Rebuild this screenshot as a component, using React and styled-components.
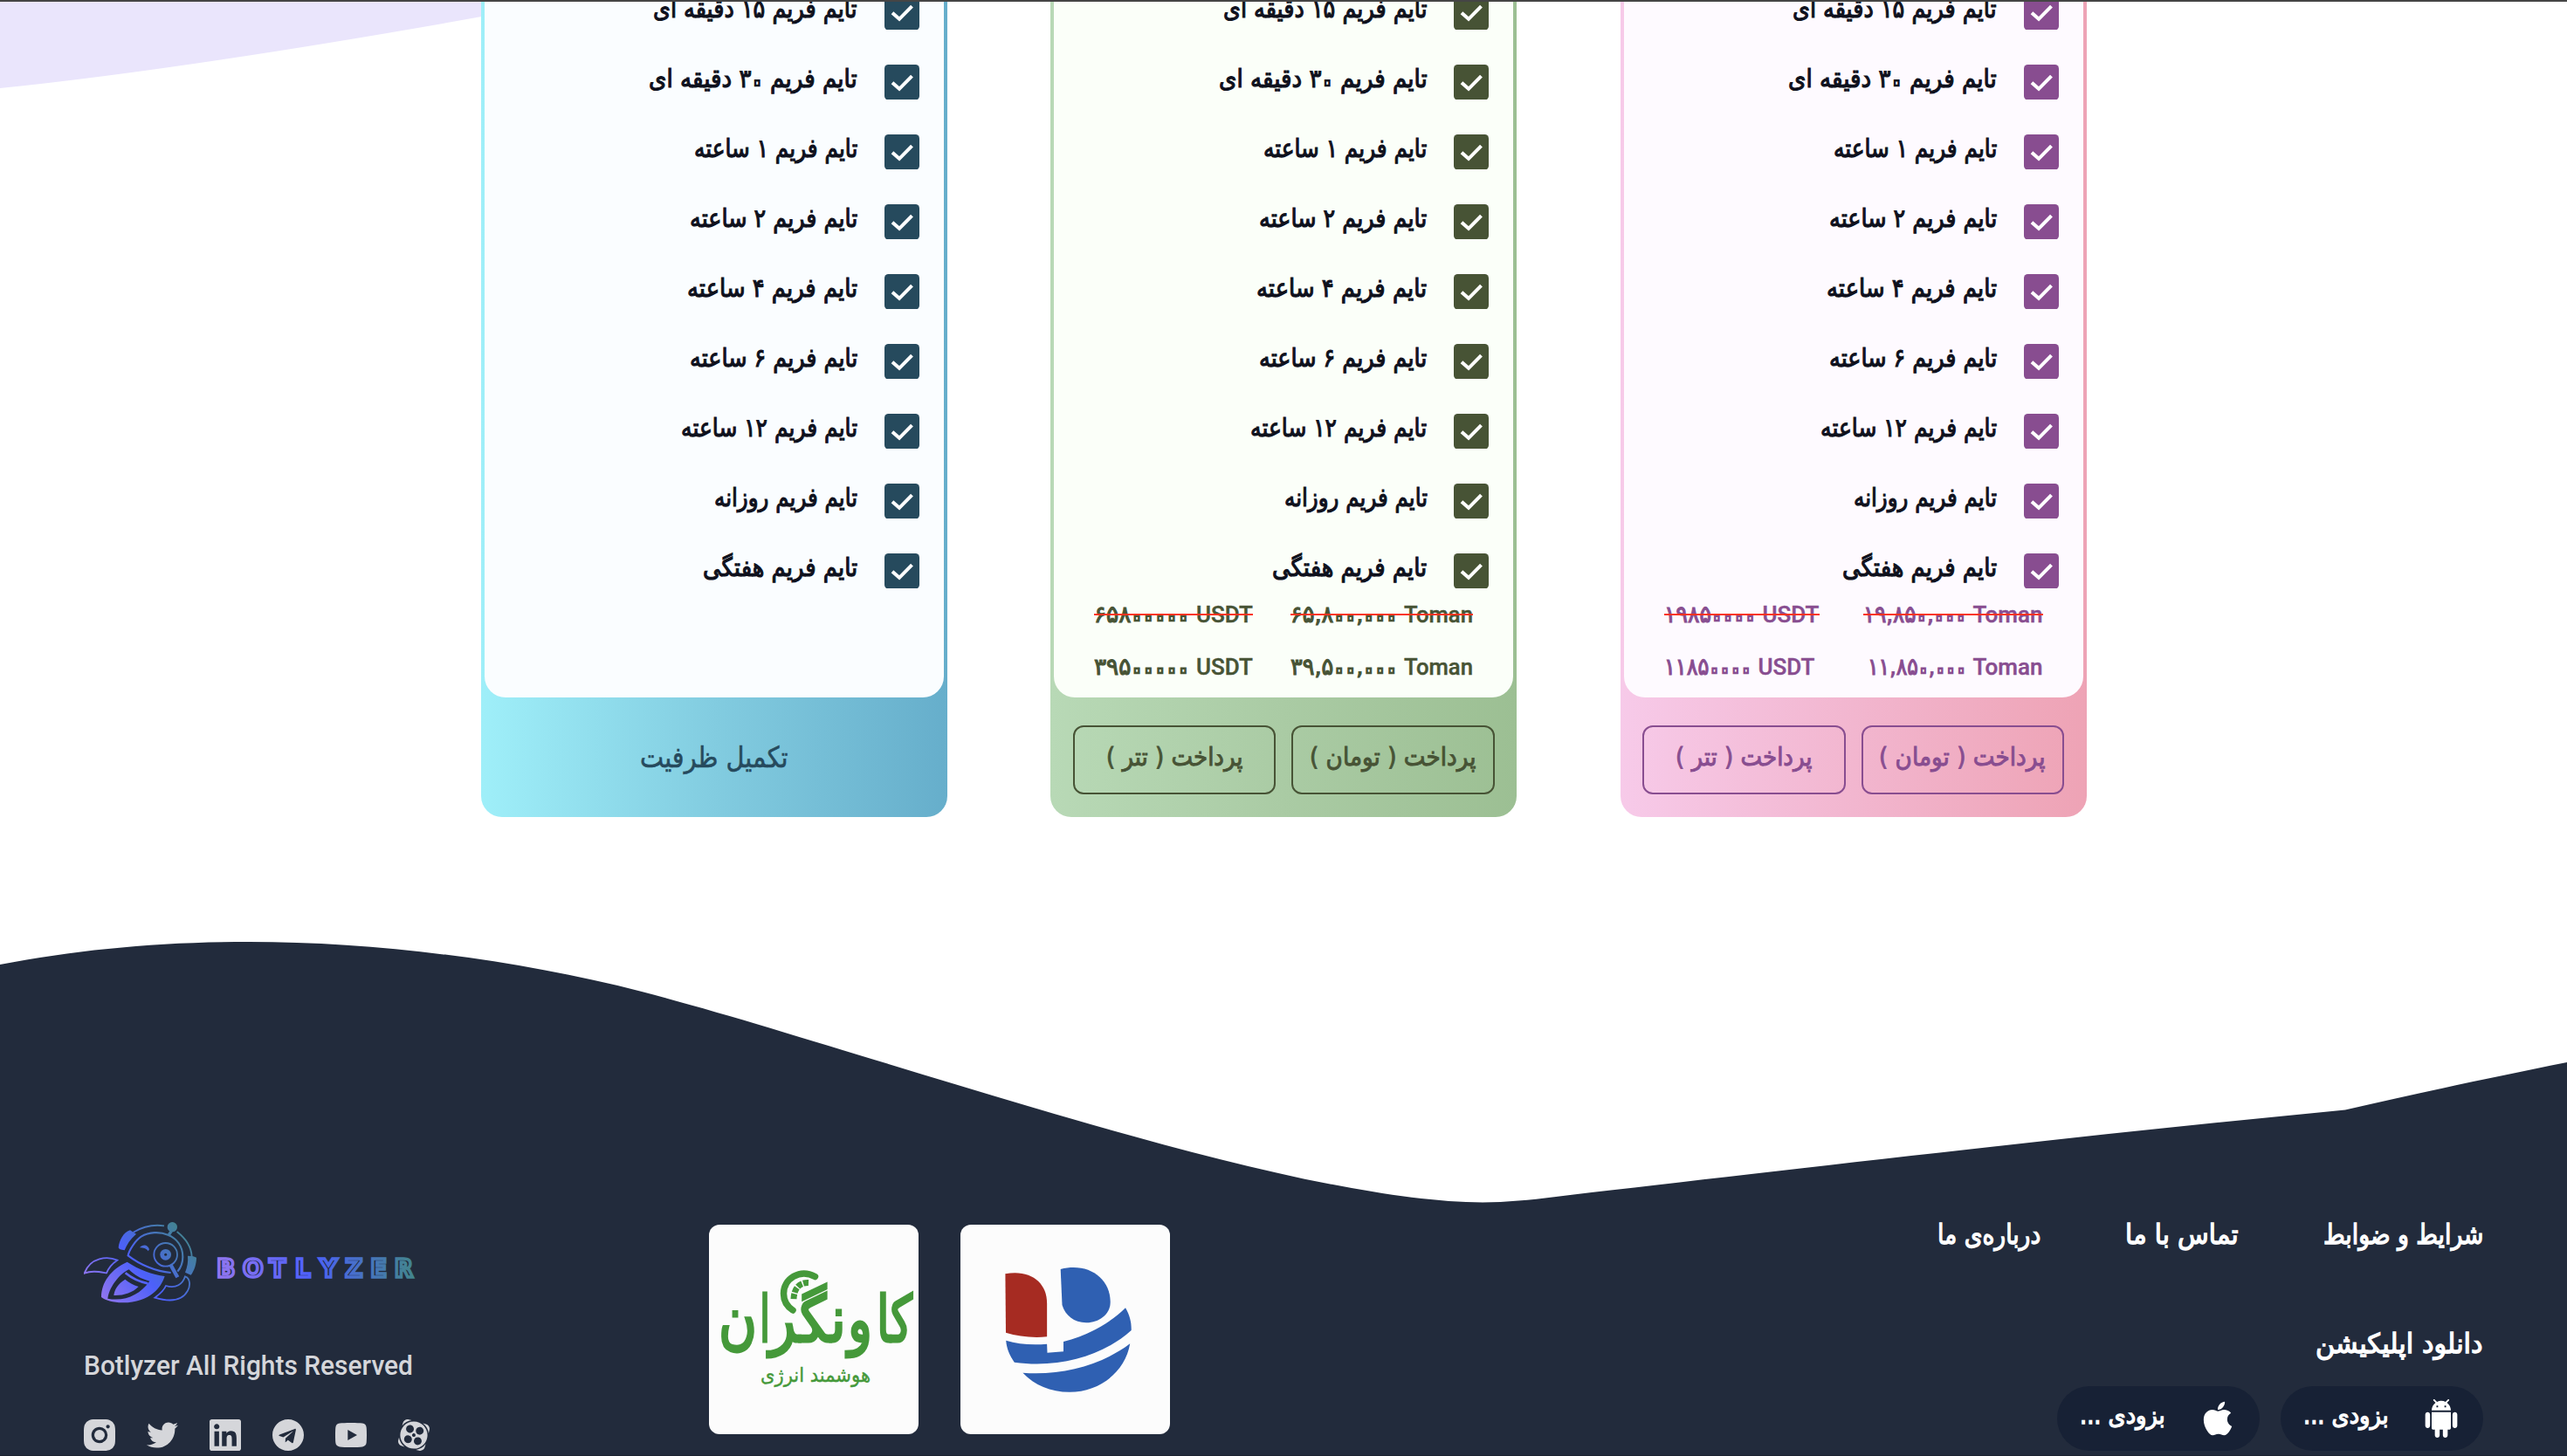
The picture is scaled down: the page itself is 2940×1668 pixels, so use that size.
import React, { useLayoutEffect, useRef, useState } from "react";
import styled, { createGlobalStyle } from "styled-components";
import { FaApple, FaLinkedin, FaTelegram, FaTwitter } from "react-icons/fa";
import { BiLogoInstagramAlt } from "react-icons/bi";
import { SiAparat } from "react-icons/si";

const GlobalStyle = createGlobalStyle`
  * { box-sizing: border-box; }
  html, body { margin: 0; padding: 0; background: #fff; }
  body { font-family: Roboto, "DejaVu Sans", sans-serif; }
`;

const INK = "#222b3c";

/* ---------- text that is condensed to a given measure ---------- */

const Measure = styled.span`
  display: inline-flex;
  flex: none;
  direction: ${(p) => p.$dir};
  width: ${(p) => p.$width}px;
  white-space: nowrap;
`;

const Glyphs = styled.span`
  display: block;
  flex: none;
  transform-origin: ${(p) => (p.$dir === "rtl" ? "right" : "left")} center;
`;

/* The Persian zero is drawn as a small open ring. */
const Zero = styled.span`
  position: relative;
  top: 0.16em;
  margin: 0 -0.11em;
  font-size: 1.6em;
  line-height: 0;
  -webkit-text-fill-color: ${(p) => p.$paper};
  -webkit-text-stroke: 2.6px currentColor;
`;

function Fit({ width, dir = "rtl", paper = "#fff", children }) {
  const ref = useRef(null);
  const [scale, setScale] = useState(1);
  useLayoutEffect(() => {
    setScale(width / ref.current.offsetWidth);
  }, [width]);
  return (
    <Measure $dir={dir} $width={width}>
      <Glyphs ref={ref} $dir={dir} style={{ transform: `scaleX(${scale})` }}>
        {children.split(/(۰)/).map((part, i) =>
          part === "۰" ? <Zero key={i} $paper={paper}>{part}</Zero> : part
        )}
      </Glyphs>
    </Measure>
  );
}

/* ---------- page ---------- */

const Page = styled.div`
  position: relative;
  width: 2940px;
  height: 1668px;
  overflow: hidden;
  background: #fff;
  border-top: 2px solid #454545;
`;

const Blob = styled.svg`
  position: absolute;
  top: 0;
  left: 0;
  width: 600px;
  height: 100px;
`;

/* ---------- plans ---------- */

const Plans = styled.section`
  position: relative;
  display: flex;
  justify-content: center;
  align-items: flex-end;
  gap: 118.5px;
  height: 934px;
  overflow: hidden;
`;

const Card = styled.article`
  flex: none;
  width: 534px;
  padding: 0 4px;
  border-radius: 0 0 24px 24px;
  background: linear-gradient(to right, ${(p) => p.$theme.from}, ${(p) => p.$theme.mid}, ${(p) => p.$theme.to});
  color: ${(p) => p.$theme.dark};
`;

const CardBody = styled.div`
  display: flex;
  flex-direction: column;
  direction: rtl;
  border-radius: 0 0 24px 24px;
  background: ${(p) => p.$theme.paper};
`;

const Features = styled.ul`
  display: flex;
  flex-direction: column;
  gap: 40px;
  margin: 0;
  padding: 0 28px;
  list-style: none;
`;

const Feature = styled.li`
  display: flex;
  align-items: center;
  gap: 30.5px;
  height: 40px;
`;

const Tick = styled.svg`
  flex: none;
  display: block;
  width: 40px;
  height: 40.5px;
  margin-top: -0.5px;
`;

const FeatureLabel = styled.span`
  display: flex;
  margin-top: -8px;
  font: 400 29.5px/40px "DejaVu Sans", sans-serif;
  color: #0f111d;
  -webkit-text-stroke: 1.2px currentColor;
`;

const Prices = styled.div`
  display: flex;
  flex-direction: column;
  direction: ltr;
  height: 125px;
  padding: 0 46px 5px;
`;

const PriceRow = styled.div`
  display: flex;
  justify-content: space-between;
  height: 60px;
  font: 500 26px/60px Roboto, "DejaVu Sans", sans-serif;
  -webkit-text-stroke: 0.4px currentColor;
`;

const Price = styled.span`
  position: relative;
  display: flex;
  align-items: baseline;
  gap: 8px;

  &::after {
    content: "";
    display: ${(p) => (p.$old ? "block" : "none")};
    position: absolute;
    left: 0;
    right: 0;
    top: 29px;
    height: 2px;
    background: #fb3420;
  }
`;

const Digits = styled.span`
  display: flex;
  font-family: "DejaVu Sans", sans-serif;
  font-weight: 400;
  font-size: 27px;
  -webkit-text-stroke: 1.2px currentColor;
`;

const Actions = styled.div`
  display: flex;
  direction: rtl;
  gap: 18px;
  height: 137px;
  padding: 32px 21.5px 26px;
`;

const PayButton = styled.button`
  flex: 1;
  display: flex;
  align-items: flex-start;
  justify-content: center;
  padding: 12px 0 0;
  border: 2px solid currentColor;
  border-radius: 12px;
  background: transparent;
  color: inherit;
  font: 400 29px/44px "DejaVu Sans", sans-serif;
  -webkit-text-stroke: 1px currentColor;
`;

const SoldOut = styled.div`
  display: flex;
  justify-content: center;
  height: 137px;
  padding-top: 44px;
  font: 400 33px/50px "DejaVu Sans", sans-serif;
  -webkit-text-stroke: 0.6px currentColor;
`;

const features = [
  ["تایم فریم ۱۵ دقیقه ای", 234],
  ["تایم فریم ۳۰ دقیقه ای", 239],
  ["تایم فریم ۱ ساعته", 187],
  ["تایم فریم ۲ ساعته", 192],
  ["تایم فریم ۴ ساعته", 195],
  ["تایم فریم ۶ ساعته", 192],
  ["تایم فریم ۱۲ ساعته", 202],
  ["تایم فریم روزانه", 164],
  ["تایم فریم هفتگی", 177],
];

const plans = [
  {
    id: "blue",
    theme: { from: "#9feff9", mid: "#82cce0", to: "#66aecb", paper: "#fafdff", dark: "#264a5d" },
    soldOut: true,
  },
  {
    id: "green",
    theme: { from: "#b8d9b6", mid: "#aacba4", to: "#9cbf93", paper: "#fbfff9", dark: "#475335" },
    old: [["۶۵۸۰۰۰۰۰", 109, 65], ["۶۵,۸۰۰,۰۰۰", 122, 79]],
    now: [["۳۹۵۰۰۰۰۰", 109, 65], ["۳۹,۵۰۰,۰۰۰", 122, 79]],
  },
  {
    id: "pink",
    theme: { from: "#f7cae9", mid: "#f2b6cf", to: "#eea3b5", paper: "#fefaff", dark: "#884d90" },
    old: [["۱۹۸۵۰۰۰۰", 105, 65], ["۱۹,۸۵۰,۰۰۰", 118, 80]],
    now: [["۱۱۸۵۰۰۰۰", 100, 65], ["۱۱,۸۵۰,۰۰۰", 113, 80]],
  },
];

function PriceLine({ items, old, paper }) {
  const units = ["USDT", "Toman"];
  return (
    <PriceRow>
      {items.map(([digits, width, unitWidth], i) => (
        <Price key={units[i]} $old={old}>
          <Digits>
            <Fit width={width} dir="ltr" paper={paper}>{digits}</Fit>
          </Digits>
          <Fit width={unitWidth} dir="ltr">{units[i]}</Fit>
        </Price>
      ))}
    </PriceRow>
  );
}

function Plan({ theme, old, now, soldOut }) {
  return (
    <Card $theme={theme}>
      <CardBody $theme={theme}>
        <Features>
          {features.map(([label, width]) => (
            <Feature key={label}>
              <Tick viewBox="0 0 40 40" preserveAspectRatio="none">
                <rect width="40" height="40" rx="4.5" fill={theme.dark} />
                <path d="M9 20.5 L17 27.5 L31.5 13" fill="none" stroke="#fff" strokeWidth="4" />
              </Tick>
              <FeatureLabel>
                <Fit width={width} paper={theme.paper}>{label}</Fit>
              </FeatureLabel>
            </Feature>
          ))}
        </Features>
        <Prices>
          {old && <PriceLine items={old} paper={theme.paper} old />}
          {now && <PriceLine items={now} paper={theme.paper} />}
        </Prices>
      </CardBody>
      {soldOut ? (
        <SoldOut>
          <Fit width={170}>تکمیل ظرفیت</Fit>
        </SoldOut>
      ) : (
        <Actions>
          <PayButton>
            <Fit width={190}>پرداخت ( تومان )</Fit>
          </PayButton>
          <PayButton>
            <Fit width={157}>پرداخت ( تتر )</Fit>
          </PayButton>
        </Actions>
      )}
    </Card>
  );
}

/* ---------- footer ---------- */

const Wave = styled.svg`
  display: block;
  width: 2940px;
  height: 300px;
  margin-top: 142px;
`;

const Footer = styled.footer`
  display: flex;
  align-items: flex-start;
  height: 290px;
  padding: 22px 96px 0;
  background: ${INK};
  border-bottom: 1px solid #1b2230;
  color: #fff;
`;

const Brand = styled.div`
  display: flex;
  flex-direction: column;
  width: 716px;
`;

const BrandMark = styled.svg`
  display: block;
  width: 400px;
  height: 94px;
`;

const Rights = styled.div`
  display: flex;
  margin-top: 51px;
  font: 500 31.5px/40px Roboto, sans-serif;
  color: #d5d6da;
`;

const Socials = styled.div`
  display: flex;
  gap: 36px;
  margin-top: 41px;
  color: #d5d6da;

  svg {
    display: block;
    width: 36px;
    height: 36px;
  }
`;

const Partners = styled.div`
  display: flex;
  gap: 48px;
  padding-top: 3px;
`;

const Partner = styled.svg`
  display: block;
  width: 240px;
  height: 240px;
  border-radius: 12px;
  background: #fcfcfc;
`;

const Links = styled.div`
  display: flex;
  flex-direction: column;
  direction: rtl;
  margin: -8px 0 0 auto;
  font: 400 31px/44px "DejaVu Sans", sans-serif;
  -webkit-text-stroke: 1.3px currentColor;
`;

const Nav = styled.nav`
  display: flex;
  gap: 97px;
  margin-bottom: 81px;
`;

const Downloads = styled.div`
  display: flex;
  gap: 24px;
  margin-top: 27px;
`;

const Pill = styled.div`
  display: flex;
  align-items: center;
  justify-content: space-between;
  width: 232px;
  height: 74px;
  padding: 0 26px;
  border-radius: 37px;
  background: #172135;
  font-size: 28px;
  line-height: 50px;

  svg {
    display: block;
    width: 44px;
    height: 44px;
  }
`;

const PillLabel = styled.span`
  display: flex;
  margin-top: -6px;
`;

function RobotLogo() {
  return (
    <BrandMark viewBox="48 62 1200 282">
      <defs>
        <linearGradient id="robot" gradientUnits="userSpaceOnUse" x1="100" y1="320" x2="390" y2="80">
          <stop offset="0" stopColor="#9276ee" />
          <stop offset="0.45" stopColor="#4c60fa" />
          <stop offset="1" stopColor="#42858c" />
        </linearGradient>
        <linearGradient id="word" gradientUnits="userSpaceOnUse" x1="507" y1="0" x2="1182" y2="0">
          <stop offset="0" stopColor="#9276ee" />
          <stop offset="0.48" stopColor="#4c60fa" />
          <stop offset="1" stopColor="#42858c" />
        </linearGradient>
      </defs>
      <g fill="none" stroke="url(#robot)" strokeWidth="5.5">
        <path d="M218 97C250 78 290 70 324 75" />
        <path d="M368 95C400 120 418 150 419 182" />
        <path d="M347 236C295 232 240 208 200 177C203 160 225 125 245 112C300 80 388 105 388 182C388 203 382 218 370 232" strokeWidth="6.5" />
        <circle cx="329" cy="174" r="40" />
        <path d="M346 208L370 252" strokeWidth="13" />
        <path d="M352 88L339 108" strokeWidth="10" />
        <path d="M163 193C130 178 70 182 50 238C75 228 100 233 126 237C133 220 145 205 163 193Z" />
        <path d="M330 281C365 292 388 275 396 249C415 255 414 282 405 298C385 335 340 336 292 322C308 310 322 300 330 281Z" />
      </g>
      <g fill="url(#robot)">
        <path d="M207 90L228 103C208 120 195 140 188 159C175 158 168 154 167 150C170 125 183 98 207 90Z" />
        <circle cx="352" cy="79" r="17" />
        <path d="M405 178C420 178 430 180 435 184C435 205 428 228 416 244L396 235C404 215 407 198 405 178Z" />
        <path d="M240 150C250 138 268 138 273 156L269 162C262 152 252 150 240 150Z" />
        <circle cx="329" cy="174" r="19" />
        <path d="M197 199C235 225 285 243 326 248C315 285 275 340 180 339C150 339 120 330 108 320C108 270 140 225 197 199Z" />
      </g>
      <circle cx="329" cy="174" r="4.5" fill={INK} />
      <path d="M203 225C180 235 138 275 130 325C190 336 240 312 274 265C245 258 220 243 203 225Z" fill={INK} />
      <path d="M190 259C165 275 154 292 151 314C185 315 215 305 236 284C218 278 202 270 190 259Z" fill="url(#robot)" />
      <path d="M191 237C213 255 240 268 268 273" fill="none" stroke="url(#robot)" strokeWidth="8" />
      <text
        x="505 594 685 774 859 946 1033 1115"
        y="252.5"
        fontFamily="DejaVu Sans, sans-serif"
        fontWeight="700"
        fontSize="83"
        fill={INK}
        stroke="url(#word)"
        strokeWidth="10.5"
      >
        BOTLYZER
      </text>
    </BrandMark>
  );
}

/* [letters, right edge, width] of each group in the wordmark */
const wordmark = [
  ["کا", 233, 41],
  ["و", 187, 28],
  ["نگر", 157, 88],
  ["ا", 70, 12],
  ["ن", 55, 44],
];

function EnergyLogo() {
  return (
    <Partner viewBox="0 0 240 240">
      <g fill="#45993a" fontFamily="DejaVu Sans, sans-serif" direction="rtl">
        {wordmark.map(([letters, x, width]) => (
          <text
            key={letters}
            x={x}
            y="134"
            fontSize="74"
            stroke="#45993a"
            strokeWidth="3"
            textLength={width}
            lengthAdjust="spacingAndGlyphs"
          >
            {letters}
          </text>
        ))}
        <text
          x="185"
          y="180"
          fontSize="23"
          stroke="#45993a"
          strokeWidth="0.4"
          textLength="126"
          lengthAdjust="spacingAndGlyphs"
        >
          هوشمند انرژی
        </text>
      </g>
      <g fill="none" stroke="#45993a">
        <path d="M121.500 59.500C104 50 85.500 62 85.500 79C85.500 88 90 94 96 98" strokeWidth="7.5" strokeLinecap="round" />
        <path d="M114 66.500C103 66 97 74 97 86" strokeWidth="7" strokeDasharray="6 1.500" />
      </g>
    </Partner>
  );
}

function BankLogo() {
  return (
    <Partner viewBox="0 0 240 240">
      <path d="M51.4 56.3C80 51 99.1 66 99.1 90V128.3C83 130 66 128 52 123.7Z" fill="#a62b22" />
      <g fill="#2f60b2">
        <path d="M114.7 51C145 43 171.7 60 171.7 89C171.7 103 158 112.5 144 112.3C130 112 120 104 116.5 92Z" />
        <path d="M52.2 132.7C66 137 82 138 99.1 136.7L99.5 146.7L118 145.3V134C145 127 170 114 189 95.3C194 104 196 112 195.7 121C165 149 115 165 61.8 157.7C56 149 53 142 52.2 132.7Z" />
        <path d="M71.4 169.7C115 173 160 162 194.2 136.3C189 168 160 191.7 125 191.7C103 191.7 85 184 71.4 169.7Z" />
      </g>
    </Partner>
  );
}

function AndroidIcon() {
  return (
    <svg viewBox="0 0 24 24" fill="#fff">
      <path d="M6 18c0 .55.45 1 1 1h1v3.5c0 .83.67 1.5 1.5 1.5s1.5-.67 1.5-1.5V19h2v3.5c0 .83.67 1.5 1.5 1.5s1.5-.67 1.5-1.5V19h1c.55 0 1-.45 1-1V8H6v10zM3.5 8C2.67 8 2 8.67 2 9.5v7c0 .83.67 1.5 1.5 1.5S5 17.33 5 16.5v-7C5 8.67 4.33 8 3.5 8zm17 0c-.83 0-1.5.67-1.5 1.5v7c0 .83.67 1.5 1.5 1.5s1.5-.67 1.5-1.5v-7c0-.83-.67-1.5-1.5-1.5zm-4.97-5.84l1.3-1.3c.2-.2.2-.51 0-.71-.2-.2-.51-.2-.71 0l-1.48 1.48C13.85 1.23 12.95 1 12 1c-.96 0-1.86.23-2.66.63L7.85.15c-.2-.2-.51-.2-.71 0-.2.2-.2.51 0 .71l1.31 1.31C6.97 3.26 6 5.01 6 7h12c0-1.99-.97-3.75-2.47-4.84zM10 5H9V4h1v1zm5 0h-1V4h1v1z" />
    </svg>
  );
}

function YoutubeIcon() {
  return (
    <svg viewBox="0 0 36 36" fill="currentColor">
      <path fillRule="evenodd" d="M18 4C24 4 28 4.200 31 4.600C34 5 35.400 6.700 35.700 9.500C36.100 14 36.100 22 35.700 26.500C35.400 29.300 34 31 31 31.400C26 32.100 10 32.100 5 31.400C2 31 .6 29.300 .3 26.500C-.1 22 -.1 14 .3 9.500C.6 6.700 2 5 5 4.600C8 4.200 12 4 18 4ZM14.300 12V24L25 18Z" />
    </svg>
  );
}

export default function App() {
  return (
    <>
      <GlobalStyle />
      <Page>
        <Blob viewBox="0 0 600 100">
          <path d="M0 0H640V1Q250 73 0 99Z" fill="#eae5fc" />
        </Blob>
        <Plans>
          {plans.map((plan) => (
            <Plan key={plan.id} {...plan} />
          ))}
        </Plans>
        <Wave viewBox="0 1078 2940 300">
          <path
            d="M0 1105C90 1088 180 1079 285 1079C430 1079 590 1099 735 1136C855 1167 1010 1218 1177 1267C1330 1312 1560 1377.500 1698 1377.500C1740 1377.500 1780 1371 1823 1366C2050 1340 2370 1302 2686 1271.500C2780 1250 2860 1233 2940 1217V1379H0Z"
            fill={INK}
          />
        </Wave>
        <Footer>
          <Brand>
            <RobotLogo />
            <Rights>
              <Fit width={377} dir="ltr">Botlyzer All Rights Reserved</Fit>
            </Rights>
            <Socials>
              <BiLogoInstagramAlt viewBox="3 3 18 18" />
              <FaTwitter />
              <FaLinkedin viewBox="0 32 448 448" />
              <FaTelegram viewBox="0 8 496 496" />
              <YoutubeIcon />
              <SiAparat />
            </Socials>
          </Brand>
          <Partners>
            <EnergyLogo />
            <BankLogo />
          </Partners>
          <Links>
            <Nav>
              <Fit width={183}>شرایط و ضوابط</Fit>
              <Fit width={130}>تماس با ما</Fit>
              <Fit width={118}>درباره‌ی ما</Fit>
            </Nav>
            <Fit width={192}>دانلود اپلیکیشن</Fit>
            <Downloads>
              <Pill>
                <AndroidIcon />
                <PillLabel>
                  <Fit width={98}>بزودی ...</Fit>
                </PillLabel>
              </Pill>
              <Pill>
                <FaApple />
                <PillLabel>
                  <Fit width={98}>بزودی ...</Fit>
                </PillLabel>
              </Pill>
            </Downloads>
          </Links>
        </Footer>
      </Page>
    </>
  );
}
